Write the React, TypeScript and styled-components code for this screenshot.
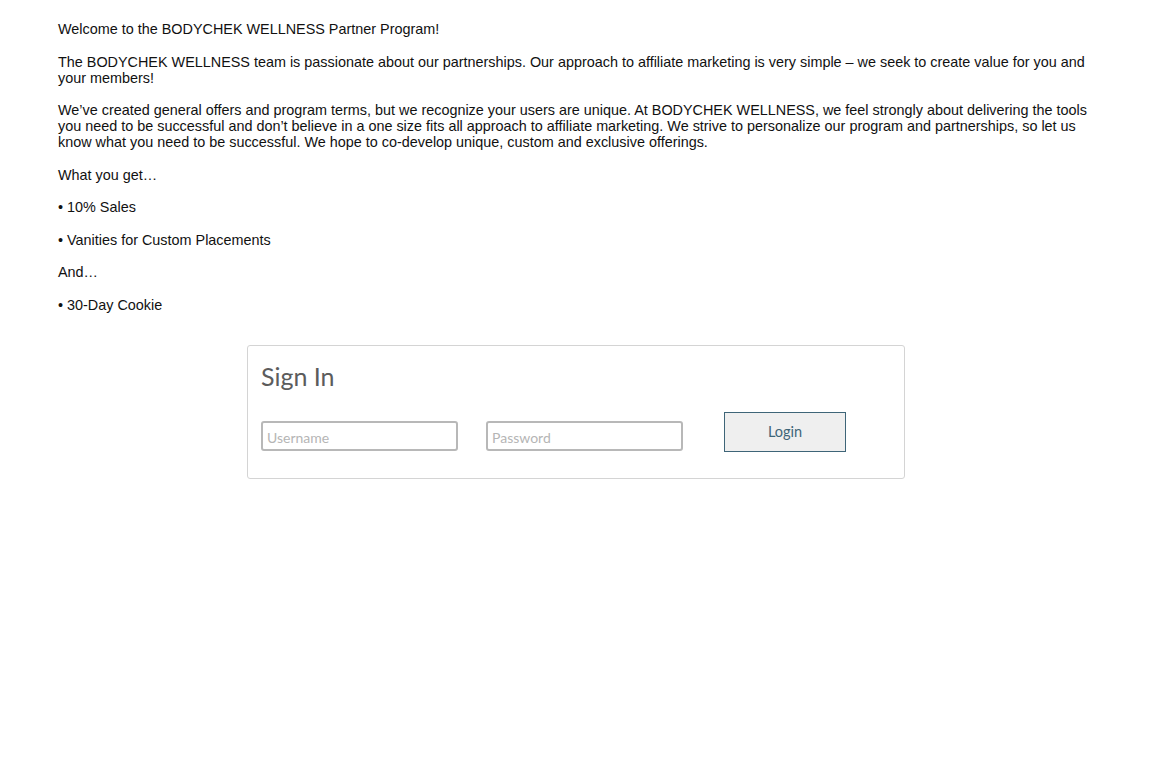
import styled, { createGlobalStyle } from "styled-components";

const GlobalStyle = createGlobalStyle`
  html, body {
    margin: 0;
    padding: 0;
    background: #ffffff;
  }
  body {
    font-family: "Liberation Sans", Arial, sans-serif;
  }
`;

// colors
const textDark = "#111111";
const boxBorder = "#d4d4d4";
const inputBorder = "#b8b8b8";
const teal = "#3e6578";

const App = () => {
  return (
    <>
      <GlobalStyle />
      <Page>
        <Intro>
          <Para>Welcome to the BODYCHEK WELLNESS Partner Program!</Para>
          <Para>
            The BODYCHEK WELLNESS team is passionate about our partnerships. Our
            approach to affiliate marketing is very simple – we seek to create
            value for you and your members!
          </Para>
          <Para>
            We’ve created general offers and program terms, but we recognize
            your users are unique. At BODYCHEK WELLNESS, we feel strongly about
            delivering the tools you need to be successful and don’t believe in
            a one size fits all approach to affiliate marketing. We strive to
            personalize our program and partnerships, so let us know what you
            need to be successful. We hope to co-develop unique, custom and
            exclusive offerings.
          </Para>
          <Para>What you get…</Para>
          <Para>• 10% Sales</Para>
          <Para>• Vanities for Custom Placements</Para>
          <Para>And…</Para>
          <Para>• 30-Day Cookie</Para>
        </Intro>

        <SignInBox>
          <Title>Sign In</Title>
          <FormRow>
            <Field type="text" placeholder="Username" />
            <Field type="password" placeholder="Password" />
            <LoginButton>Login</LoginButton>
          </FormRow>
        </SignInBox>
      </Page>
    </>
  );
};

const Page = styled.div`
  padding: 21px 58px 0 58px;
  min-height: 768px;
  box-sizing: border-box;
`;

const Intro = styled.div`
  color: ${textDark};
  font-size: 14.4px;
  line-height: 16px;
`;

const Para = styled.p`
  margin: 0 0 16.5px 0;
`;

const SignInBox = styled.div`
  width: 658px;
  height: 134px;
  box-sizing: border-box;
  margin: 32px auto 0 auto;
  border: 1px solid ${boxBorder};
  border-radius: 3px;
  padding: 15px 14px 0 13px;
`;

const Title = styled.h2`
  margin: 0;
  font-family: "Lato", "Noto Sans", sans-serif;
  font-weight: 400;
  font-size: 25px;
  line-height: 30px;
  color: #5c5c5c;
`;

const FormRow = styled.div`
  display: flex;
  align-items: flex-end;
  margin-top: 21px;
`;

const Field = styled.input`
  width: 197px;
  height: 30px;
  box-sizing: border-box;
  border: 2px solid ${inputBorder};
  border-radius: 3px;
  padding: 3px 4px 0 4px;
  margin-right: 28px;
  margin-bottom: 1px;
  font-family: "Lato", "Noto Sans", sans-serif;
  font-size: 14px;
  color: #333;
  &::placeholder {
    color: #b5b5b5;
  }
  &:nth-of-type(2) {
    margin-right: 41px;
  }
  &:focus {
    outline: none;
  }
`;

const LoginButton = styled.button`
  width: 122px;
  height: 40px;
  box-sizing: border-box;
  background-color: #efefef;
  border: 1px solid ${teal};
  border-radius: 0;
  color: ${teal};
  font-family: "Lato", "Noto Sans", sans-serif;
  font-size: 14.5px;
  cursor: pointer;
`;

export default App;
